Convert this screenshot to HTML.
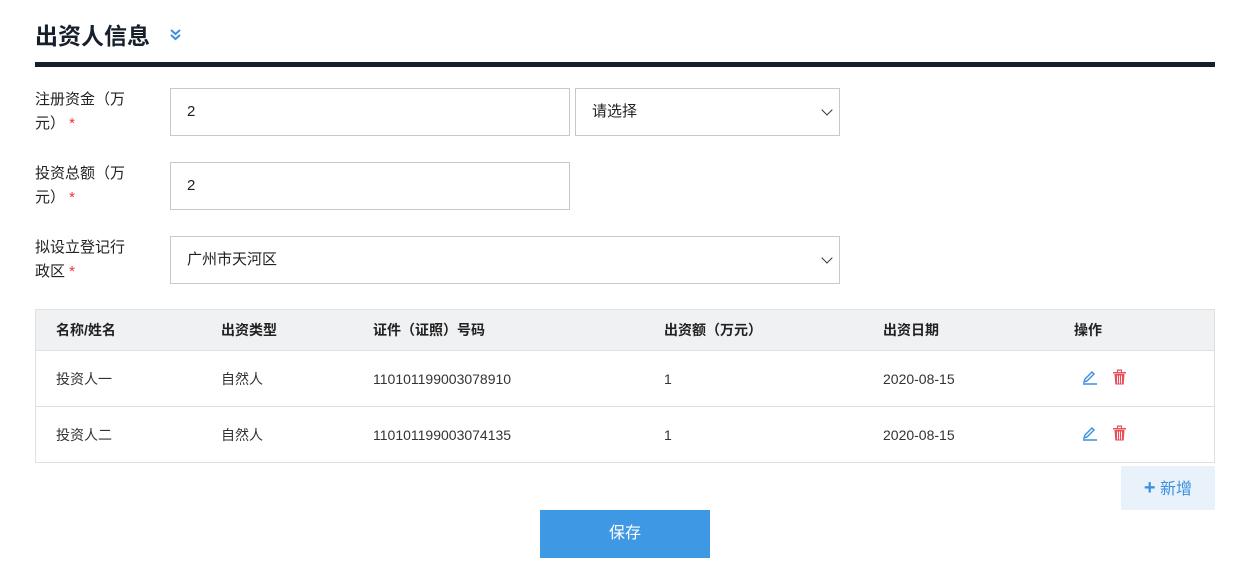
<!DOCTYPE html>
<html><head><meta charset="utf-8"><style>
*{box-sizing:border-box;margin:0;padding:0}
body{width:1245px;height:587px;background:#fff;font-family:"Liberation Sans","Noto Sans CJK SC",sans-serif;color:#1a1a1a;position:relative;overflow:hidden}
.abs{position:absolute}
.title{left:35px;top:17px;font-size:23px;font-weight:bold;color:#15202b}
.bar{left:35px;top:62px;width:1180px;height:5px;background:#15202b}
.lbl{left:35px;font-size:15px;line-height:24px;color:#222}
.lbl span{color:#e33}
.inp{border:1px solid #c8c8c8;height:48px;font-size:15px;padding-left:16px;line-height:46px;color:#222}
.sel:after{content:"";position:absolute;right:8px;top:17px;width:7px;height:7px;border-right:1.5px solid #333;border-bottom:1.5px solid #333;transform:rotate(45deg)}
.tbl{left:35px;top:309px;width:1180px;height:154px;border:1px solid #e0e0e0}
.th{height:41px;background:#f0f1f3;border-bottom:1px solid #e0e0e0}
.row{height:56px;border-bottom:1px solid #e0e0e0;position:relative}
.row:last-child{border-bottom:none}
.c{position:absolute;font-size:14px;color:#333;line-height:20px}
.th .c{top:10px;font-weight:bold;color:#222}
.row .c{top:18px}
</style></head><body>
<div class="abs title">出资人信息</div>
<svg class="abs" style="left:169px;top:28px" width="13" height="13" viewBox="0 0 13 13"><path d="M2 2l4.5 4 4.5-4M2 7l4.5 4 4.5-4" fill="none" stroke="#3b8fe0" stroke-width="2"/></svg>
<div class="abs bar"></div>

<div class="abs lbl" style="top:88px">注册资金（万<br>元）<span> *</span></div>
<div class="abs inp" style="left:170px;top:88px;width:400px">2</div>
<div class="abs inp sel" style="left:575px;top:88px;width:265px">请选择</div>

<div class="abs lbl" style="top:162px">投资总额（万<br>元）<span> *</span></div>
<div class="abs inp" style="left:170px;top:162px;width:400px">2</div>

<div class="abs lbl" style="top:236px">拟设立登记行<br>政区<span> *</span></div>
<div class="abs inp sel" style="left:170px;top:236px;width:670px">广州市天河区</div>

<div class="abs tbl">
<div class="th" style="position:relative">
<div class="c" style="left:20px">名称/姓名</div><div class="c" style="left:185px">出资类型</div><div class="c" style="left:337px">证件（证照）号码</div><div class="c" style="left:628px">出资额（万元）</div><div class="c" style="left:847px">出资日期</div><div class="c" style="left:1038px">操作</div>
</div>
<div class="row"><div class="c" style="left:20px">投资人一</div><div class="c" style="left:185px">自然人</div><div class="c" style="left:337px">110101199003078910</div><div class="c" style="left:628px">1</div><div class="c" style="left:847px">2020-08-15</div>
<svg class="c" style="left:1046px;top:20px" width="16" height="14" viewBox="0 0 16 14"><path d="M1 13h14M2 11l1-3 7-7 2 2-7 7z" fill="none" stroke="#3b8fe0" stroke-width="1.4"/></svg>
<svg class="c" style="left:1077px;top:18px" width="13" height="16" viewBox="0 0 13 16"><path d="M4 .5h5v2.5h-1v-1.3h-3v1.3h-1zM0 3h13v1.5H0zM1.5 5h10l-.8 10.5H2.3z" fill="#e84d5b"/><path d="M4.5 6.5v8M6.5 6.5v8M8.5 6.5v8" stroke="#fff" stroke-width=".9"/></svg></div>
<div class="row"><div class="c" style="left:20px">投资人二</div><div class="c" style="left:185px">自然人</div><div class="c" style="left:337px">110101199003074135</div><div class="c" style="left:628px">1</div><div class="c" style="left:847px">2020-08-15</div>
<svg class="c" style="left:1046px;top:20px" width="16" height="14" viewBox="0 0 16 14"><path d="M1 13h14M2 11l1-3 7-7 2 2-7 7z" fill="none" stroke="#3b8fe0" stroke-width="1.4"/></svg>
<svg class="c" style="left:1077px;top:18px" width="13" height="16" viewBox="0 0 13 16"><path d="M4 .5h5v2.5h-1v-1.3h-3v1.3h-1zM0 3h13v1.5H0zM1.5 5h10l-.8 10.5H2.3z" fill="#e84d5b"/><path d="M4.5 6.5v8M6.5 6.5v8M8.5 6.5v8" stroke="#fff" stroke-width=".9"/></svg></div>
</div>

<div class="abs" style="left:1121px;top:466px;width:94px;height:44px;background:#e9f2fb;color:#3b8fe0;font-size:16px;line-height:44px;text-align:center"><b style="font-size:20px">+</b> 新增</div>
<div class="abs" style="left:540px;top:510px;width:170px;height:48px;background:#3f98e3;color:#fff;font-size:16px;line-height:48px;text-align:center">保存</div>
</body></html>
